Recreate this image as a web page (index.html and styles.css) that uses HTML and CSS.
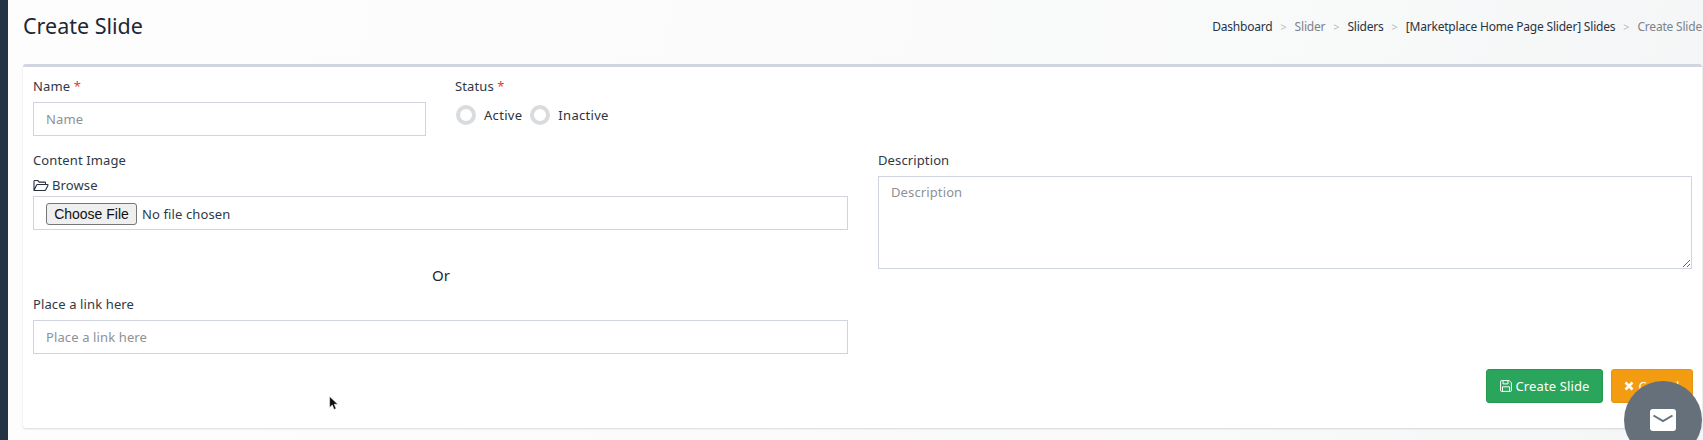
FILE: index.html
```html
<!DOCTYPE html>
<html lang="en">
<head>
<meta charset="utf-8">
<title>Create Slide</title>
<link rel="stylesheet" href="styles.css">
</head>
<body>
<div class="app">
  <aside class="sidebar"></aside>
  <main class="main">
    <header class="page-head">
      <h1 class="page-title">Create Slide</h1>
      <nav class="crumbs">
        <span class="crumb">Dashboard</span><span class="sep">&gt;</span>
        <span class="crumb muted">Slider</span><span class="sep">&gt;</span>
        <span class="crumb">Sliders</span><span class="sep">&gt;</span>
        <span class="crumb">[Marketplace Home Page Slider] Slides</span><span class="sep">&gt;</span>
        <span class="crumb muted">Create Slide</span>
      </nav>
    </header>
    <form class="card">
      <div class="row-top">
        <div class="field-name">
          <label class="label">Name <span class="req">*</span></label>
          <input class="input" type="text" placeholder="Name">
        </div>
        <div class="field-status">
          <label class="label">Status <span class="req">*</span></label>
          <div class="radios">
            <span class="radio"></span><span class="radio-text">Active</span>
            <span class="radio"></span><span class="radio-text">Inactive</span>
          </div>
        </div>
      </div>
      <div class="row-main">
        <div class="col-left">
          <label class="label">Content Image</label>
          <label class="label browse">
            <svg class="icon-folder" viewBox="0 0 16 13" width="16" height="13"><path d="M1 11.500V2.200c0-.4.3-.7.7-.7h3l1.500 1.600h5.600c.4 0 .7.3.7.7V5.500M1 11.500l2.600-5.400c.2-.4.5-.6.9-.6h10c.5 0 .7.4.5.8l-2.200 4.500c-.2.4-.5.7-1 .7H1z" fill="none" stroke="#27303f" stroke-width="1.100" stroke-linejoin="round"/></svg>
            Browse
          </label>
          <input class="input file" type="file">
          <div class="or">Or</div>
          <label class="label">Place a link here</label>
          <input class="input" type="text" placeholder="Place a link here">
        </div>
        <div class="col-right">
          <label class="label">Description</label>
          <textarea class="input area" placeholder="Description"></textarea>
        </div>
      </div>
      <div class="actions">
        <button type="button" class="btn btn-green">
          <svg class="btn-icon" viewBox="0 0 12 12" width="12" height="12"><path d="M.6 1.300c0-.4.3-.7.7-.7h7.900l2.200 2.200v7.900c0 .4-.3.7-.7.7H1.300c-.4 0-.7-.3-.7-.7V1.300zM3 .8v3.100h5V.8M2.500 11.200V6.800h7v4.400" fill="none" stroke="#fff" stroke-width="1"/></svg>
          Create Slide
        </button>
        <button type="button" class="btn btn-orange">
          <svg class="btn-icon" viewBox="0 0 10 10" width="10" height="10"><path d="M1.500 1.500l7 7M8.500 1.500l-7 7" fill="none" stroke="#fff" stroke-width="2.600"/></svg>
          Cancel
        </button>
      </div>
    </form>
  </main>
</div>
<svg class="cursor" viewBox="0 0 10 15" width="10" height="15"><path d="M.6.4v11l2.700-2.400 1.800 4.400 2-.9-1.900-4.300h3.600z" fill="#111" stroke="#fff" stroke-width=".5"/></svg>
<div class="chat">
  <svg viewBox="0 0 26 22" width="26" height="22"><rect width="26" height="22" rx="3" fill="#fff"/><path d="M3.500 6.500L13 12l9.500-5.500" fill="none" stroke="#66707a" stroke-width="2"/></svg>
</div>
</body>
</html>
```
FILE: styles.css
```css
* { box-sizing: border-box; }
html, body { margin: 0; height: 100%; overflow: hidden; }
body {
  font-family: "Noto Sans", "Open Sans", sans-serif;
  font-size: 13px;
  letter-spacing: .12px;
  color: #2a3342;
  background: linear-gradient(100deg, #fdfdfd 0%, #fbfbfc 45%, #f8f9f9 75%, #f4f5f6 100%);
}
.app { display: flex; height: 440px; }
.sidebar { width: 8px; flex: none; background: #253444; }
.main { flex: 1; min-width: 0; padding: 0 1px 0 15px; }
.page-head {
  height: 64px;
  display: flex;
  justify-content: space-between;
  align-items: flex-start;
}
.page-title {
  margin: 11px 0 0;
  font-size: 21.500px;
  line-height: 30px;
  font-weight: 400;
  letter-spacing: 0;
  color: #1d2735;
}
.crumbs {
  display: flex;
  margin: 18px 0 0 0;
  font-size: 12px;
  letter-spacing: -.2px;
  line-height: 18px;
  color: #2a3342;
}
.muted { color: #7c838b; }
.sep { margin: 0 8px; color: #b8bcc2; font-size: 11px; }
.card {
  height: 364px;
  padding: 10px 9px 0 10px;
  background: #fff;
  border-top: 3px solid #d0d5df;
  border-radius: 3px;
  box-shadow: 0 1px 2px rgba(0, 0, 0, .14);
}
.label {
  display: block;
  font-size: 13px;
  line-height: 18px;
  color: #2f3848;
}
.req { color: #f0352b; }
.row-top { display: flex; height: 70px; }
.field-name { width: 393px; margin-right: 29px; }
.field-status { flex: 1; padding-left: 1px; }
.field-status .label { margin-left: -1px; }
.input {
  display: block;
  width: 100%;
  height: 34px;
  margin-top: 7px;
  padding: 0 12px;
  font: inherit;
  letter-spacing: .12px;
  color: #2f3848;
  background: #fff;
  border: 1px solid #cfd4de;
  border-radius: 0;
}
.input::placeholder { color: #8d9196; opacity: 1; }
.radios { display: flex; align-items: center; margin-top: 8px; height: 24px; }
.radio {
  width: 20px;
  height: 20px;
  border: 4px solid #d8dcdf;
  border-radius: 50%;
  flex: none;
}
.radio-text { margin: 0 8px; letter-spacing: .3px; }
.row-main { display: flex; gap: 30px; margin-top: 4px; }
.col-left { width: 815px; flex: none; }
.col-right { width: 814px; flex: none; }
.browse { margin-top: 7px; display: flex; align-items: center; gap: 3px; }
.icon-folder { flex: none; }
.file { margin-top: 2px; padding: 6px 12px; line-height: 20px; }
.file::file-selector-button {
  width: 91px;
  height: 22px;
  margin-right: 5px;
  padding: 0;
  font: 14px "Liberation Sans", sans-serif;
  letter-spacing: 0;
  color: #111;
  background: #efefef;
  border: 1px solid #767676;
  border-radius: 3px;
}
.or { margin-top: 35px; margin-left: 399px; font-size: 15px; line-height: 20px; color: #1d2735; }
.or + .label { margin-top: 10px; }
.area { height: 93px; margin-top: 7px; padding: 6px 12px; resize: both; }
.actions { display: flex; justify-content: flex-end; gap: 8px; margin-top: 15px; }
.btn {
  display: flex;
  align-items: center;
  justify-content: center;
  gap: 4px;
  height: 34px;
  padding: 0;
  font: inherit;
  letter-spacing: .12px;
  color: #fff;
  border-radius: 3px;
  border: 1px solid transparent;
}
.btn-green { width: 117px; background: #2aa65c; border-color: #26994f; }
.btn-orange { width: 82px; background: #f39c12; border-color: #e69310; }
.cursor { position: absolute; left: 329px; top: 396px; }
.chat {
  position: absolute;
  left: 1624px;
  top: 381px;
  width: 78px;
  height: 78px;
  padding-top: 28px;
  border-radius: 50%;
  background: #66707a;
  display: flex;
  justify-content: center;
  align-items: flex-start;
}
```
